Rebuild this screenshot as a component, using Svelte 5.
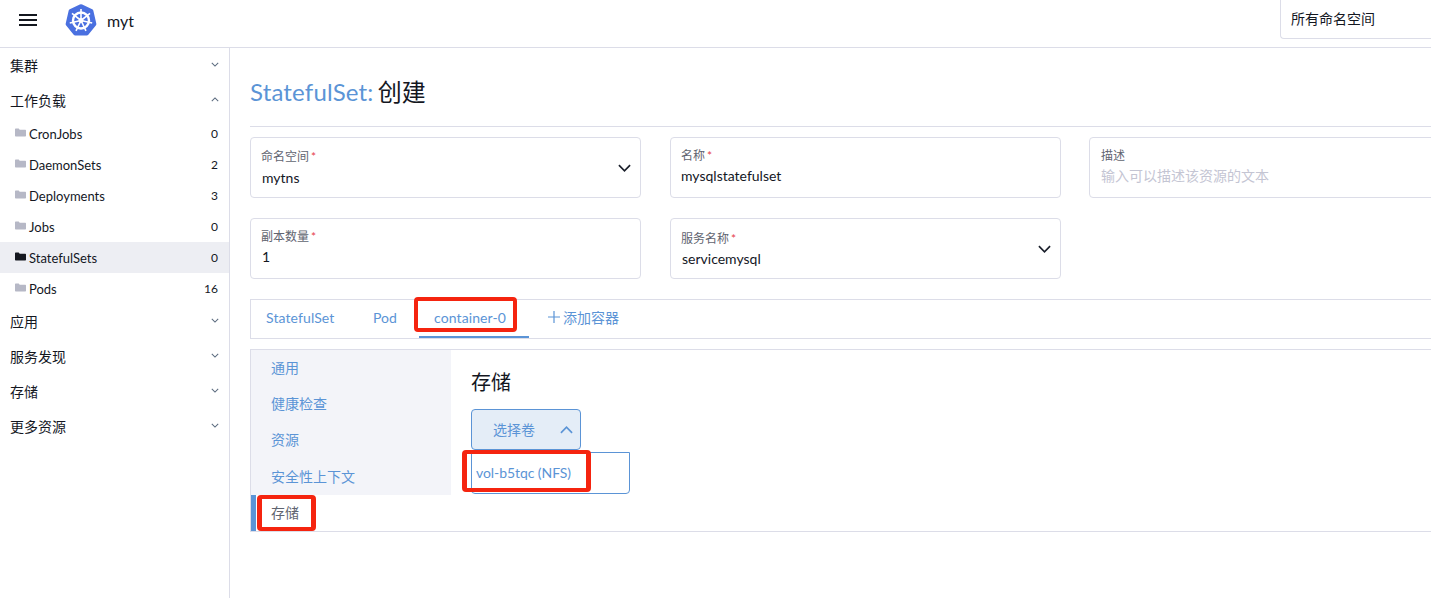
<script>
  const subs = [
    ['CronJobs', 0], ['DaemonSets', 2], ['Deployments', 3], ['Jobs', 0], ['StatefulSets', 0], ['Pods', 16]
  ];
  const spokes = [0, 51.43, 102.86, 154.29, 205.71, 257.14, 308.57];
</script>

{#snippet chev(up)}
  <svg class="chev" class:up viewBox="0 0 10 6" width="8" height="5"><path d="M1 1l4 4 4-4" fill="none" stroke="#5a6a7e" stroke-width="1.3"/></svg>
{/snippet}
{#snippet big(cls)}
  <svg class={cls} viewBox="0 0 14 8" width="13" height="8"><path d="M1 1l6 6 6-6" fill="none" stroke="#1a1f2b" stroke-width="1.8"/></svg>
{/snippet}
{#snippet folder(dark)}
  <svg class="folder" viewBox="0 0 11 9" width="11" height="9"><path d="M0 1.2Q0 .5.7.5h3l1 1.2h5.6q.7 0 .7.7v5.4q0 .7-.7.7H.7Q0 8.500 0 7.800z" fill={dark ? '#14171f' : '#b6b8c6'}/></svg>
{/snippet}

<div class="page">
  <header class="topbar">
    <div class="burger"><i></i><i></i><i></i></div>
    <svg class="logo" viewBox="0 0 34 34" width="34" height="34">
      <path d="M15.800 1.400Q17 .9 18.200 1.400L28.200 6.200Q29.100 6.600 29.300 7.600L32.300 20.500Q32.500 21.500 32 22.200L24.300 31.800Q23.700 32.500 22.800 32.500H11.200Q10.300 32.500 9.700 31.800L2 22.200Q1.500 21.500 1.700 20.500L4.700 7.600Q4.900 6.600 5.800 6.200Z" fill="#4a70e0"/>
      <circle cx="17" cy="17.500" r="8" fill="none" stroke="#fff" stroke-width="2.400"/>
      <circle cx="17" cy="17.500" r="2.400" fill="#fff"/>
      {#each spokes as a}
        <path d="M17 17.500V6" stroke="#fff" stroke-width="1.600" transform="rotate({a} 17 17.500)"/>
      {/each}
    </svg>
    <span class="cluster">myt</span>
    <div class="ns">所有命名空间</div>
  </header>

  <div class="body">
    <aside class="side">
      <div class="group">集群{@render chev(false)}</div>
      <div class="group">工作负载{@render chev(true)}</div>
      {#each subs as [name, n]}
        <div class="sub" class:cur={name === 'StatefulSets'}>
          {@render folder(name === 'StatefulSets')}
          <span class="subname">{name}</span>
          <span class="count">{n}</span>
        </div>
      {/each}
      <div class="group">应用{@render chev(false)}</div>
      <div class="group">服务发现{@render chev(false)}</div>
      <div class="group">存储{@render chev(false)}</div>
      <div class="group">更多资源{@render chev(false)}</div>
    </aside>

    <main class="main">
      <h1 class="title"><span class="kind">StatefulSet:</span> 创建</h1>
      <div class="rule"></div>

      <div class="form">
        <div class="field first">
          <div class="lab">命名空间<b>*</b></div>
          <div class="val">mytns</div>
          {@render big('arrow')}
        </div>
        <div class="field">
          <div class="lab">名称<b>*</b></div>
          <div class="val flush">mysqlstatefulset</div>
        </div>
        <div class="field third">
          <div class="lab">描述</div>
          <div class="val ph flush">输入可以描述该资源的文本</div>
        </div>
        <div class="field">
          <div class="lab">副本数量<b>*</b></div>
          <div class="val">1</div>
        </div>
        <div class="field low">
          <div class="lab">服务名称<b>*</b></div>
          <div class="val">servicemysql</div>
          {@render big('arrow')}
        </div>
      </div>

      <nav class="tabs">
        <span class="tab t1">StatefulSet</span>
        <span class="tab t2">Pod</span>
        <span class="tab t3">container-0</span>
        <span class="tab t4"><svg viewBox="0 0 12 12" width="12" height="12"><path d="M6 0v12M0 6h12" stroke="#5b94d6" stroke-width="1.200"/></svg>添加容器</span>
      </nav>

      <section class="panel">
        <div class="snav">
          <div class="si">通用</div>
          <div class="si">健康检查</div>
          <div class="si">资源</div>
          <div class="si">安全性上下文</div>
          <div class="si on">存储</div>
        </div>
        <div class="pane">
          <h2>存储</h2>
          <div class="btn"><span class="btxt">选择卷</span><svg viewBox="0 0 14 8" width="13" height="8"><path d="M1 7l6-6 6 6" fill="none" stroke="#5b94d6" stroke-width="1.800"/></svg></div>
          <div class="menu">vol-b5tqc (NFS)</div>
        </div>
      </section>
    </main>
  </div>

  <div class="mark m1"></div>
  <div class="mark m2"></div>
  <div class="mark m3"></div>
</div>

<style>
  :global(body) { margin: 0; background: #fff; overflow: hidden; }
  .page {
    position: relative; width: 1431px; height: 598px; overflow: hidden;
    font-family: Lato, "Noto Sans CJK SC", sans-serif; color: #14171f; font-size: 14px;
  }
  .topbar {
    height: 47px; border-bottom: 1px solid #dcdde8; display: flex; align-items: flex-start;
  }
  .burger { margin: 14px 0 0 19px; width: 18px; display: flex; flex-direction: column; gap: 3px; }
  .burger i { display: block; height: 2px; background: #14171f; }
  .logo { margin: 3px 0 0 27px; }
  .cluster { margin: 11px 0 0 9px; font-size: 16px; line-height: 20px; }
  .ns {
    margin-left: auto; width: 151px; height: 39px; box-sizing: border-box;
    border: 1px solid #dcdde8; border-top: 0; border-right: 0; border-radius: 0 0 0 4px;
    padding-left: 10px; line-height: 38px; font-size: 14px;
  }
  .body { display: flex; height: 550px; }
  .side { width: 229px; flex: none; border-right: 1px solid #dcdde8; }
  .group {
    height: 35px; box-sizing: border-box; display: flex; align-items: center; justify-content: space-between;
    padding: 0 10px 2px; font-size: 14px;
  }
  .chev { flex: none; margin-top: -1px; }
  .chev.up { transform: rotate(180deg); }
  .sub {
    height: 31px; display: flex; align-items: center; padding: 0 11px 0 15px; font-size: 13px;
  }
  .sub.cur { background: #edeef3; }
  .folder { flex: none; margin-right: 3px; margin-top: -2px; }
  .count { margin-left: auto; font-size: 12px; }
  .main { flex: 1; min-width: 0; padding-left: 20px; }
  .title { margin: 0; height: 78px; line-height: 88px; font-size: 24px; font-weight: 400; white-space: nowrap; }
  .kind { color: #5b94d6; letter-spacing: .17px; margin-right: -2px; }
  .rule { height: 1px; background: #dcdde8; margin-bottom: 10px; }
  .form { display: grid; grid-template-columns: 391px 391px 391px; column-gap: 29px; row-gap: 20px; }
  .field {
    position: relative; height: 61px; box-sizing: border-box; border: 1px solid #dcdde8;
    border-radius: 4px; padding: 10px 10px 0;
  }
  .third { margin-left: -1px; padding-left: 11px; }
  .lab { font-size: 12px; line-height: 16px; color: #5f6470; }
  .lab b { color: #e6404a; font-weight: 400; margin-left: 2px; }
  .val { font-size: 14px; line-height: 18px; margin-top: 3px; padding-left: 1px; }
  .val.flush { padding-left: 0; }
  .val.ph { color: #c4c5d3; }
  .first .lab { margin-top: 1px; }
  .first .val { margin-top: 4px; }
  .low .lab { margin-top: 2px; }
  .arrow { position: absolute; right: 9px; top: 26px; }
  .tabs {
    height: 40px; box-sizing: border-box; margin-top: 20px; border: 1px solid #dcdde8; border-right: 0;
    display: flex; color: #5b94d6; font-size: 14px; position: relative;
  }
  .tab { display: flex; align-items: center; height: 34px; box-sizing: border-box; white-space: nowrap; }
  .t1 { margin-left: 15px; width: 107px; letter-spacing: .1px; }
  .t2 { width: 46px; }
  .t3 { width: 110px; padding-left: 15px; border-bottom: 2px solid #5b94d6; height: 38px; letter-spacing: .1px; padding-bottom: 2px; }
  .t4 { margin-left: 19px; gap: 3px; }
  .panel {
    margin-top: 10px; height: 183px; box-sizing: border-box; border: 1px solid #dcdde8; border-right: 0;
    display: flex;
  }
  .snav { width: 200px; flex: none; }
  .si {
    height: 36px; line-height: 36px; padding-left: 20px; background: #f3f4f9; color: #5b94d6; font-size: 14px;
  }
  .si:nth-child(4) { height: 37px; line-height: 37px; }
  .si.on { background: #fff; color: #5f6470; border-left: 5px solid #5b94d6; padding-left: 15px; }
  .pane { padding-left: 20px; }
  .pane h2 { margin: 0; font-size: 20px; font-weight: 400; line-height: 28px; padding-top: 18px; }
  .btn {
    width: 110px; height: 41px; box-sizing: border-box; margin-top: 13px; border: 1px solid #5b94d6; border-radius: 4px;
    background: #e4edf7; color: #5b94d6; display: flex; align-items: center; justify-content: space-between;
    padding: 0 7px 0 21px; font-size: 14px;
  }
  .btxt { margin-top: -2px; }
  .menu {
    width: 159px; height: 42px; box-sizing: border-box; margin-top: 2px; border: 1px solid #5b94d6;
    border-radius: 0 0 4px 4px; color: #5b94d6; font-size: 14px; line-height: 40px; padding-left: 4px; white-space: nowrap;
    letter-spacing: -.07px;
  }
  .mark { position: absolute; box-sizing: border-box; border: 4px solid #f5240f; border-radius: 4px; }
  .m1 { left: 414px; top: 297px; width: 103px; height: 35px; }
  .m2 { left: 462px; top: 450px; width: 129px; height: 42px; border-left-width: 5px; border-right-width: 5px; }
  .m3 { left: 257px; top: 495px; width: 59px; height: 36px; border-left-width: 5px; border-right-width: 5px; }
</style>
